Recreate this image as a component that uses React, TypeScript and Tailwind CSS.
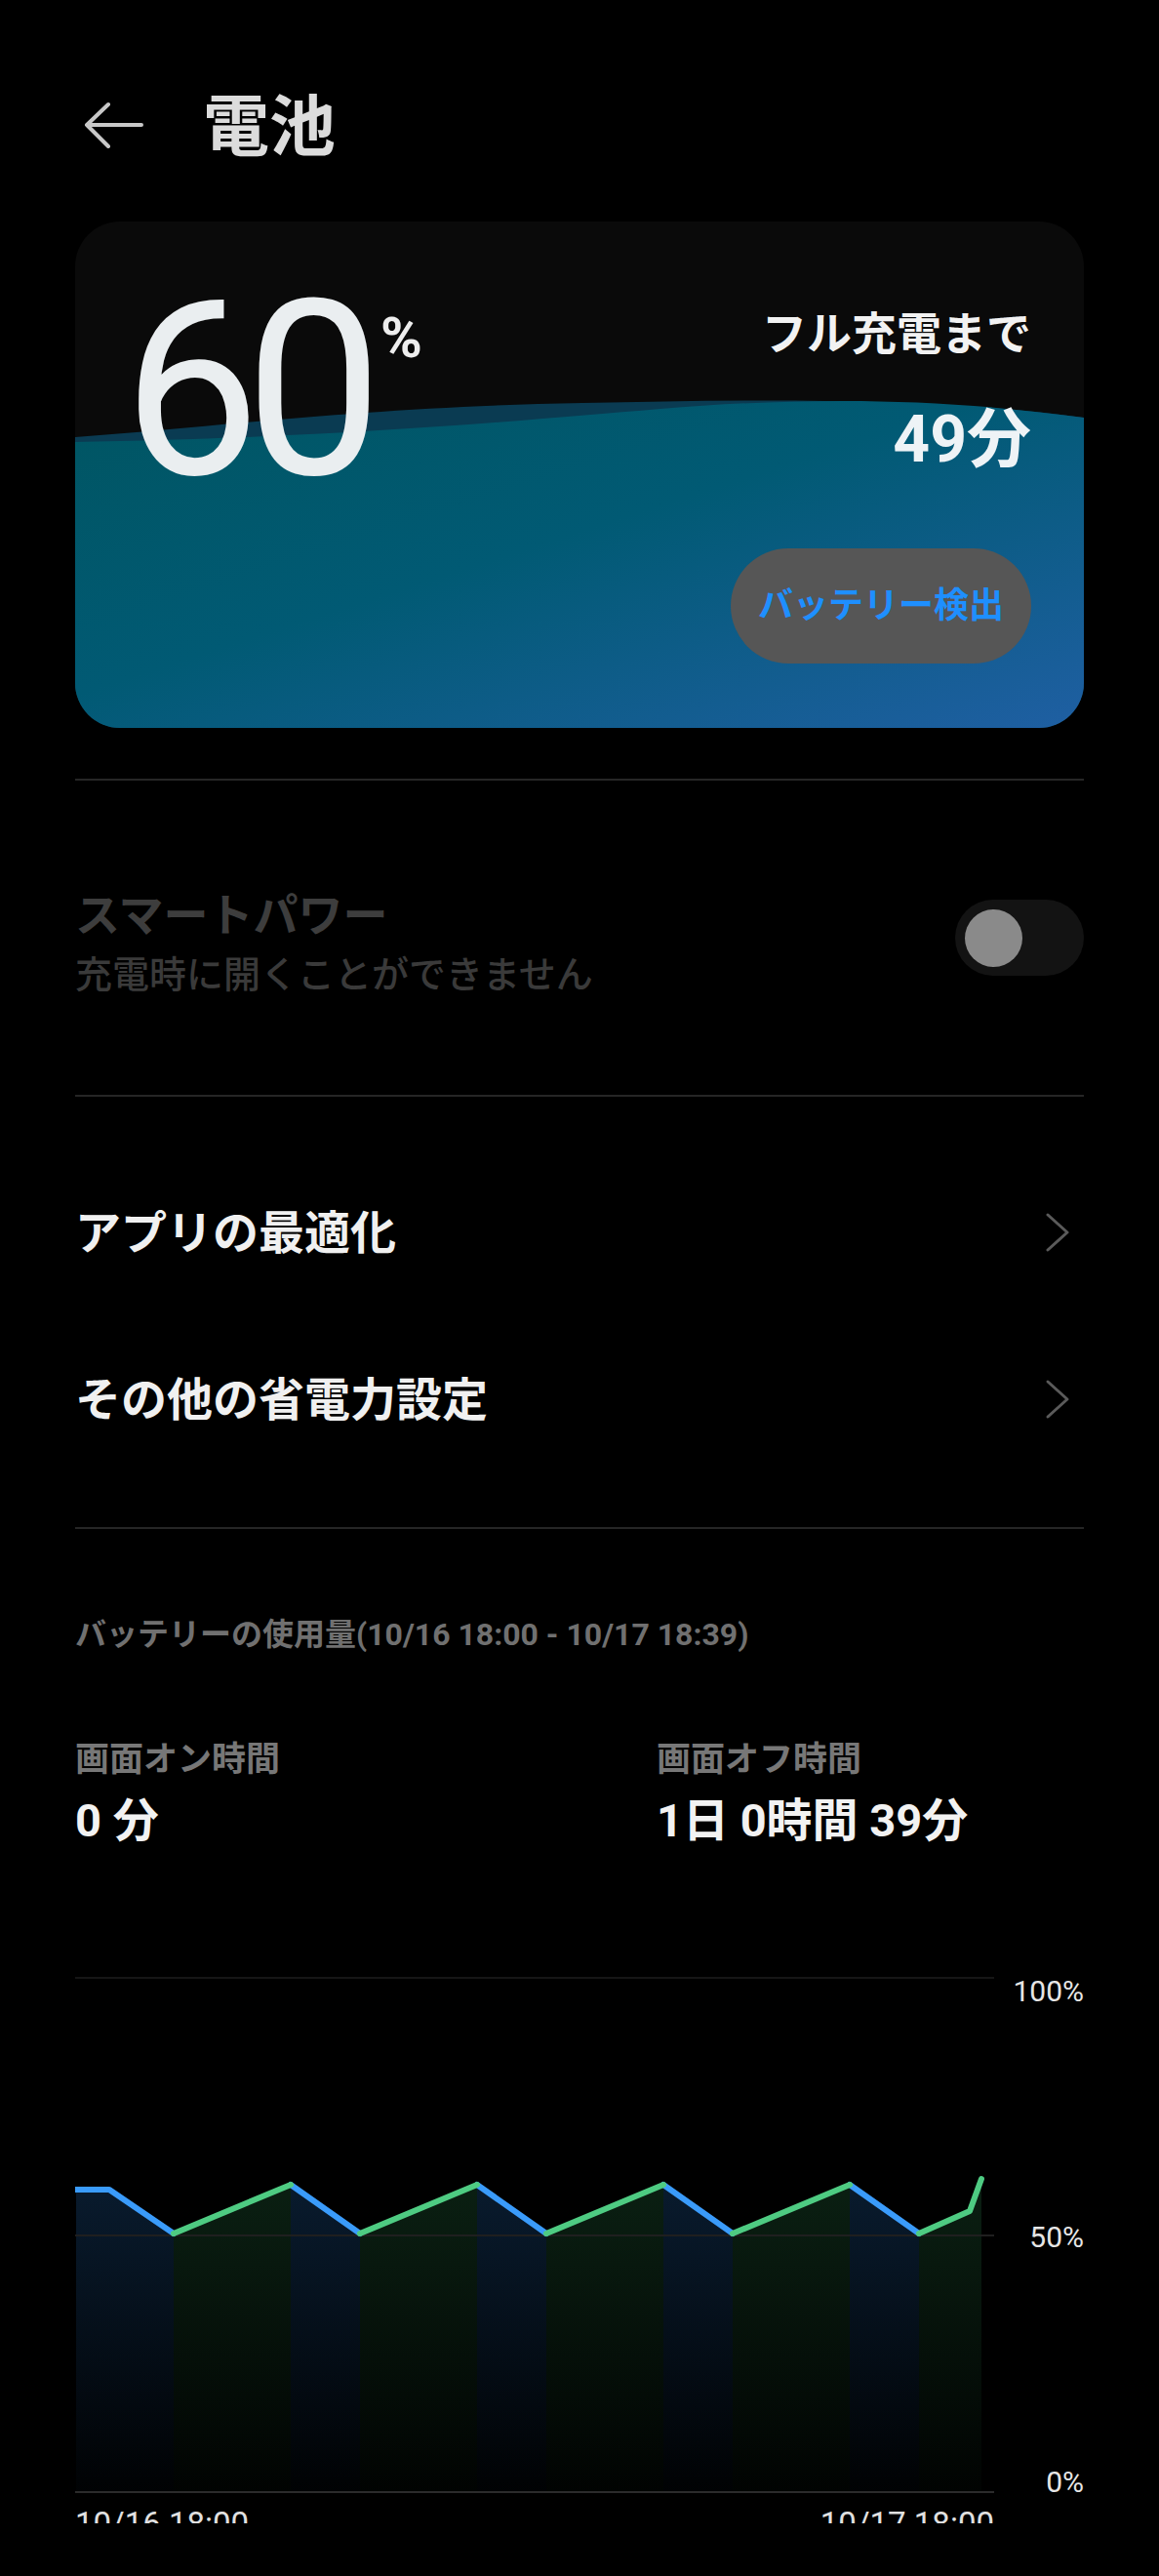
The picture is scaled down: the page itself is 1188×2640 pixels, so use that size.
import React from "react";

const blueSegs = [
  [[1, 218], [35, 218], [101, 263]],
  [[221, 213], [292, 263]],
  [[412, 213], [483, 263]],
  [[603, 213], [674, 263]],
  [[794, 213], [865, 263]],
];

const greenSegs = [
  [[101, 263], [221, 213]],
  [[292, 263], [412, 213]],
  [[483, 263], [603, 213]],
  [[674, 263], [794, 213]],
  [[865, 263], [917, 240], [929, 207]],
];

const BASE = 528;

function toLine(pts: number[][]) {
  return pts.map((p, i) => `${i === 0 ? "M" : "L"}${p[0]} ${p[1]}`).join(" ");
}

function toArea(pts: number[][]) {
  const first = pts[0];
  const last = pts[pts.length - 1];
  return `${toLine(pts)} L${last[0]} ${BASE} L${first[0]} ${BASE} Z`;
}

function Chevron() {
  return (
    <svg width="26" height="42" viewBox="0 0 26 42" className="mr-[14px]">
      <path d="M3 3 L23 21 L3 39" fill="none" stroke="#5a5a5a" strokeWidth="3" strokeLinecap="round" strokeLinejoin="round" />
    </svg>
  );
}

function UsageChart() {
  return (
    <svg width="942" height="533" viewBox="0 0 942 533">
      <defs>
        <linearGradient id="blueFill" gradientUnits="userSpaceOnUse" x1="0" y1="200" x2="0" y2="522">
          <stop offset="0" stopColor="#2a7fd8" stopOpacity="0.22" />
          <stop offset="1" stopColor="#2a7fd8" stopOpacity="0.02" />
        </linearGradient>
        <linearGradient id="greenFill" gradientUnits="userSpaceOnUse" x1="0" y1="200" x2="0" y2="522">
          <stop offset="0" stopColor="#3fbf6f" stopOpacity="0.17" />
          <stop offset="1" stopColor="#3fbf6f" stopOpacity="0.02" />
        </linearGradient>
      </defs>
      <line x1="0" y1="1" x2="942" y2="1" stroke="#161616" strokeWidth="2" />
      {blueSegs.map((s, i) => (
        <path key={"ba" + i} d={toArea(s)} fill="url(#blueFill)" />
      ))}
      {greenSegs.map((s, i) => (
        <path key={"ga" + i} d={toArea(s)} fill="url(#greenFill)" />
      ))}
      <line x1="0" y1="265" x2="942" y2="265" stroke="#1f1f1f" strokeWidth="2" />
      <line x1="0" y1="528" x2="942" y2="528" stroke="#2b2b2b" strokeWidth="2" />
      {blueSegs.map((s, i) => (
        <path key={"bl" + i} d={toLine(s)} fill="none" stroke="#3a9bfa" strokeWidth="6" strokeLinecap="round" strokeLinejoin="round" />
      ))}
      {greenSegs.map((s, i) => (
        <path key={"gl" + i} d={toLine(s)} fill="none" stroke="#4ecb82" strokeWidth="6" strokeLinecap="round" strokeLinejoin="round" />
      ))}
    </svg>
  );
}

export default function App() {
  return (
    <div className="min-h-[2640px] w-full bg-black text-white font-[Roboto,'Noto_Sans_CJK_JP',sans-serif]">
      <div className="px-[77px] pt-[92px]">
        {/* header */}
        <div className="flex items-center h-[78px]">
          <svg width="62" height="48" viewBox="0 0 62 48" className="ml-[9px] mb-[6px]">
            <path d="M59 24 H3 M25 3 L3 24 L25 46" fill="none" stroke="#c8c8c8" strokeWidth="4" strokeLinecap="round" strokeLinejoin="round" />
          </svg>
          <h1 className="ml-[60px] text-[68px] font-bold leading-none text-[#dcdcdc]">電池</h1>
        </div>

        {/* battery card */}
        <div className="relative mt-[57px] h-[519px] rounded-[46px] bg-[#0a0a0a] overflow-hidden">
          <svg className="absolute inset-0 w-full h-full" viewBox="0 0 1034 519" preserveAspectRatio="none">
            <defs>
              <linearGradient id="water" x1="0" y1="0" x2="1" y2="1">
                <stop offset="0" stopColor="#005562" />
                <stop offset="0.45" stopColor="#015a74" />
                <stop offset="1" stopColor="#1f5fa3" />
              </linearGradient>
            </defs>
            <path d="M0 221 C150 210, 300 190, 520 186 C700 182, 880 180, 1034 201 V519 H0 Z" fill="#0a3b52" />
            <path d="M0 226 C250 222, 450 205, 600 192 C750 180, 880 180, 1034 201 V519 H0 Z" fill="url(#water)" />
          </svg>
          <div className="relative flex justify-between h-full pl-[49px] pr-[54px]">
            <div className="flex items-start pt-[49px]">
              <span className="text-[250px] font-normal leading-none tracking-[-0.06em] text-[#eaeef0]">60</span>
              <span className="ml-[13px] mt-[41px] text-[58px] font-bold leading-none text-[#eeeeee]">%</span>
            </div>
            <div className="flex flex-col items-end pt-[92px] pb-[66px]">
              <div className="text-[46px] font-bold leading-none text-[#f2f2f2]">フル充電まで</div>
              <div className="mt-[53px] text-[66px] font-bold leading-none text-[#eef3f6]">49分</div>
              <button className="mt-auto flex items-center justify-center h-[118px] w-[308px] rounded-full bg-[#565656] text-[36px] font-bold text-[#1e8fff]">
                バッテリー検出
              </button>
            </div>
          </div>
        </div>

        <div className="mt-[52px] h-[2px] bg-[#262626]" />

        {/* smart power */}
        <div className="flex items-center justify-between h-[322px]">
          <div className="pt-[10px]">
            <div className="text-[46px] font-bold leading-none text-[#3d3d3d]">スマートパワー</div>
            <div className="mt-[19px] text-[38px] font-medium leading-none text-[#3a3a3a]">充電時に開くことができません</div>
          </div>
          <div className="flex items-center w-[132px] h-[78px] rounded-full bg-[#131313] pl-[10px]">
            <div className="w-[59px] h-[59px] rounded-full bg-[#8a8a8a]" />
          </div>
        </div>

        <div className="h-[2px] bg-[#262626]" />

        {/* menu rows */}
        <div className="mt-[89px] flex items-center justify-between h-[100px]">
          <span className="text-[47px] font-bold leading-none text-[#f0f0f0]">アプリの最適化</span>
          <Chevron />
        </div>
        <div className="mt-[71px] flex items-center justify-between h-[100px]">
          <span className="text-[47px] font-bold leading-none text-[#f0f0f0]">その他の省電力設定</span>
          <Chevron />
        </div>

        <div className="mt-[81px] h-[2px] bg-[#262626]" />

        {/* usage */}
        <div className="mt-[92px] text-[32px] font-bold leading-none text-[#707070]">
          バッテリーの使用量(10/16 18:00 - 10/17 18:39)
        </div>

        <div className="mt-[95px] grid grid-cols-[596px_1fr]">
          <div>
            <div className="text-[35px] font-bold leading-none text-[#777777]">画面オン時間</div>
            <div className="mt-[21px] text-[47px] font-bold leading-none text-[#f2f2f2]">0 分</div>
          </div>
          <div>
            <div className="text-[35px] font-bold leading-none text-[#777777]">画面オフ時間</div>
            <div className="mt-[21px] text-[47px] font-bold leading-none text-[#f2f2f2]">1日 0時間 39分</div>
          </div>
        </div>

        {/* chart */}
        <div className="mt-[137px] flex h-[533px]">
          <UsageChart />
          <div className="flex-1 flex flex-col justify-between items-end text-[30px] leading-none text-[#e6e6e6]">
            <span>100%</span>
            <span>50%</span>
            <span>0%</span>
          </div>
        </div>
        {/* axis labels are cut by the bottom edge of the scroll area, as on the device */}
        <div className="mt-[11px] h-[16px] w-[942px] overflow-hidden flex justify-between text-[33px] leading-none text-[#e0e0e0]">
          <span>10/16 18:00</span>
          <span>10/17 18:00</span>
        </div>
      </div>
    </div>
  );
}
